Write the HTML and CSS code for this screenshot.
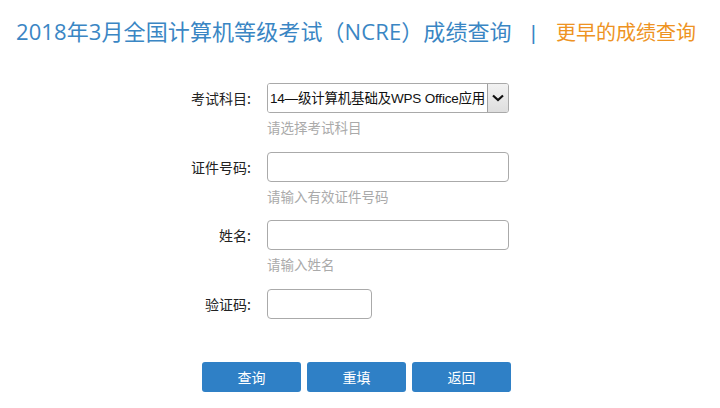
FILE: index.html
```html
<!DOCTYPE html>
<html lang="zh-CN">
<head>
    <meta charset="UTF-8">
    <title>成绩查询</title>
    <link rel="stylesheet" href="styles.css">
</head>
<body>
    <div class="header">
        <h1 class="title">2018年3月全国计算机等级考试（NCRE）成绩查询</h1>
        <span class="sep">|</span>
        <a class="more" href="#">更早的成绩查询</a>
    </div>

    <form class="query-form">
        <div class="row">
            <label class="label" for="subject">考试科目:</label>
            <div class="field">
                <div class="select-box">
                    <select id="subject">
                        <option>14—级计算机基础及WPS Office应用</option>
                    </select>
                    <span class="arrow">
                        <svg width="12" height="8" viewBox="0 0 12 8"><path d="M1 1.5 L6 6 L11 1.5" fill="none" stroke="#111" stroke-width="2.2"/></svg>
                    </span>
                </div>
                <div class="hint">请选择考试科目</div>
            </div>
        </div>
        <div class="row">
            <label class="label" for="idno">证件号码:</label>
            <div class="field">
                <input type="text" id="idno" class="input">
                <div class="hint">请输入有效证件号码</div>
            </div>
        </div>
        <div class="row">
            <label class="label" for="name">姓名:</label>
            <div class="field">
                <input type="text" id="name" class="input">
                <div class="hint">请输入姓名</div>
            </div>
        </div>
        <div class="row">
            <label class="label" for="code">验证码:</label>
            <div class="field">
                <input type="text" id="code" class="input input-code">
            </div>
        </div>
        <div class="button-group">
            <button type="button" class="btn">查询</button>
            <button type="button" class="btn">重填</button>
            <button type="button" class="btn">返回</button>
        </div>
    </form>
</body>
</html>
```

FILE: styles.css
```css
* {
    margin: 0;
    padding: 0;
    box-sizing: border-box;
}
body {
    font-family: "Liberation Sans", "Noto Sans CJK SC", sans-serif;
    background-color: #ffffff;
    color: #333333;
    font-size: 14px;
}
.header {
    display: flex;
    align-items: baseline;
    height: 66px;
    padding: 16px 0 0 16px;
    line-height: 30px;
}
.title {
    font-family: "Open Sans", "Noto Sans CJK SC", sans-serif;
    font-size: 22px;
    font-weight: normal;
    color: #3a86c4;
    letter-spacing: 0.1px;
}
.sep {
    font-size: 20px;
    color: #3a86c4;
    margin: 0 20px 0 19px;
}
.more {
    font-family: "Noto Sans CJK SC", sans-serif;
    font-size: 20px;
    color: #ee9322;
    text-decoration: none;
}
.query-form {
    padding-top: 17px;
}
.row {
    display: flex;
    gap: 16px;
    margin-bottom: 14.5px;
}
.label {
    width: 251px;
    text-align: right;
    line-height: 30px;
    font-family: "Noto Sans CJK SC", sans-serif;
    font-size: 14px;
    color: #222;
}
.field {
    width: 242px;
}
.select-box {
    display: flex;
    height: 30px;
    border: 1px solid #a9a9a9;
    border-radius: 3px;
    overflow: hidden;
}
.select-box select {
    flex: 1;
    width: 0;
    min-width: 0;
    appearance: none;
    border: none;
    outline: none;
    background: #fff;
    padding-left: 2px;
    font-family: "Liberation Sans", "Noto Sans CJK SC", sans-serif;
    font-size: 13.5px;
    letter-spacing: -0.2px;
    color: #111;
}
.arrow {
    flex: 0 0 21px;
    display: flex;
    align-items: center;
    justify-content: center;
    background: linear-gradient(#f2f2f2, #dedede);
    border-left: 1px solid #a0a0a0;
}
.input {
    display: block;
    width: 242px;
    height: 30px;
    border: 1px solid #aaaaaa;
    border-radius: 4px;
    outline: none;
    padding: 0 6px;
    font-size: 14px;
}
.input-code {
    width: 105px;
}
.hint {
    margin-top: 4px;
    line-height: 20px;
    font-family: "Noto Sans CJK SC", sans-serif;
    font-size: 13.5px;
    color: #aaaaaa;
}
.button-group {
    display: flex;
    gap: 6px;
    margin: 43px 0 0 202px;
}
.btn {
    width: 99px;
    height: 30px;
    border: none;
    border-radius: 3px;
    background-color: #2f80c6;
    color: #ffffff;
    font-family: "Noto Sans CJK SC", sans-serif;
    font-size: 14px;
    cursor: pointer;
}
```
